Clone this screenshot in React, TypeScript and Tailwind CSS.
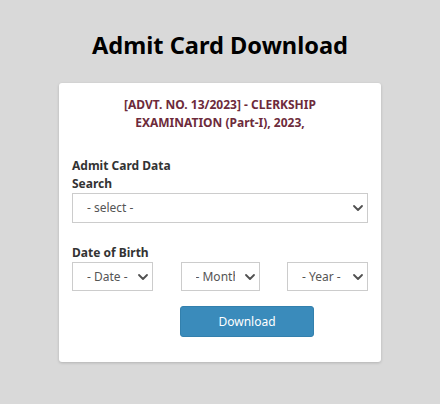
import { ChevronDown } from 'lucide-react';

function Dropdown({ label, width }: { label: string; width: string }) {
  return (
    <div className={`relative ${width}`}>
      <select className="w-full h-full appearance-none bg-white border border-[#cccccc] pl-[14px] pr-[24px] text-[12px] text-[#555555] outline-none">
        <option>{label}</option>
      </select>
      <ChevronDown
        size={16}
        strokeWidth={2.75}
        className="pointer-events-none absolute right-[2px] top-1/2 -translate-y-1/2 text-[#505050]"
      />
    </div>
  );
}

export default function App() {
  return (
    <div
      className="min-h-[404px] bg-[#d9d9d9] flex flex-col items-center"
      style={{ fontFamily: '"Noto Sans", "Open Sans", sans-serif' }}
    >
      <h1 className="pt-[29px] text-[23.6px] leading-[32px] font-bold text-black">Admit Card Download</h1>

      <div className="mt-[22px] w-[322px] bg-white rounded-[3px] shadow-[0_1px_3px_rgba(0,0,0,0.18)] px-[13px] pt-[13px] pb-[25px]">
        <p className="text-center text-[12px] leading-[18px] font-bold text-[#6d2b3b]">
          [ADVT. NO. 13/2023] - CLERKSHIP
          <br />
          EXAMINATION (Part-I), 2023,
        </p>

        <div className="mt-[25px] text-[12px] leading-[18px] font-bold text-[#333333]">
          Admit Card Data
          <br />
          Search
        </div>
        <div className="h-[30px]">
          <Dropdown label="- select -" width="w-full h-full" />
        </div>

        <div className="mt-[21px] text-[12px] leading-[18px] font-bold text-[#333333]">Date of Birth</div>
        <div className="flex justify-between h-[29px]">
          <Dropdown label="- Date -" width="w-[81px] h-full" />
          <Dropdown label="- Month -" width="w-[79px] h-full" />
          <Dropdown label="- Year -" width="w-[81px] h-full" />
        </div>

        <button className="mt-[15px] ml-[108px] w-[134px] h-[31px] rounded-[3px] bg-[#3a8bbb] border border-[#3380ad] text-white text-[12px]">
          Download
        </button>
      </div>
    </div>
  );
}
